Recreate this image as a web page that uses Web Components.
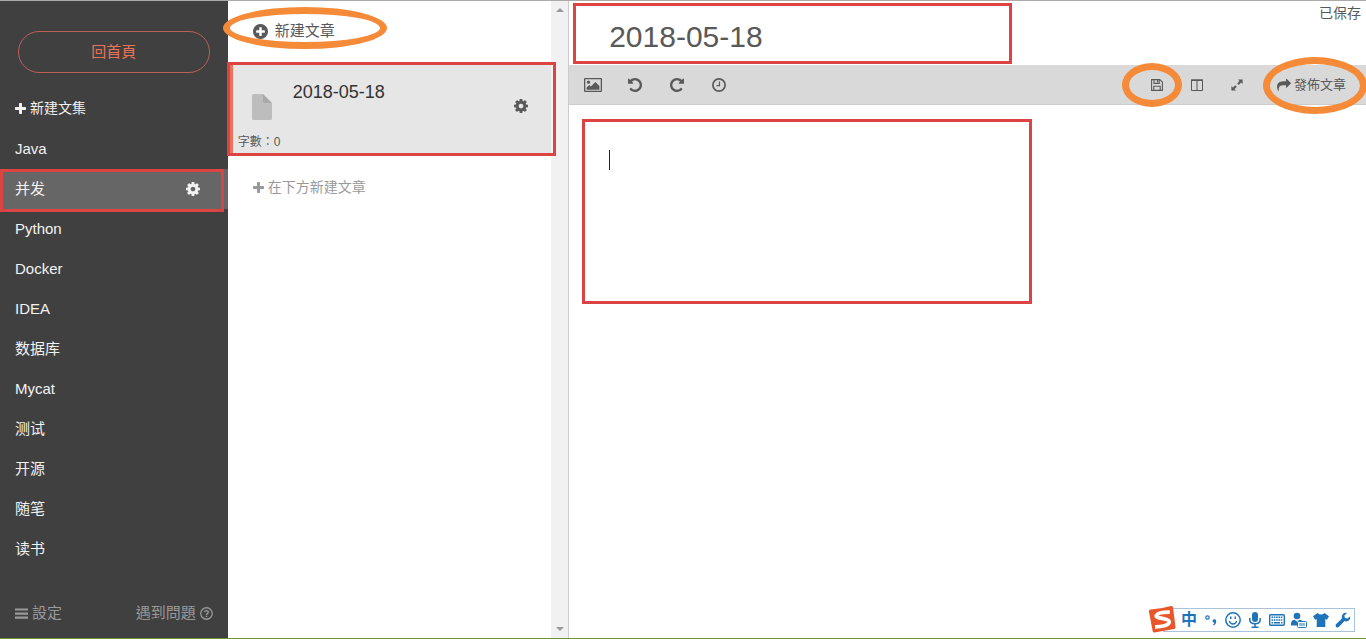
<!DOCTYPE html>
<html lang="zh-Hant">
<head>
<meta charset="utf-8">
<meta name="viewport" content="width=device-width, initial-scale=1">
<title>2018-05-18</title>
<style>
html, body { margin: 0; height: 100%; }
body {
  font-family: "Liberation Sans", "Noto Sans CJK TC", sans-serif;
  font-size: 14px; color: #595959; background: #fff; overflow: hidden;
}
</style>
</head>
<body>
<writer-app></writer-app>

<script>
const COG = '<path fill-rule="evenodd" d="M1152 896q0-106-75-181t-181-75-181 75-75 181 75 181 181 75 181-75 75-181zm512-109v222q0 12-8 23t-20 13l-185 28q-19 54-39 91 35 50 107 138 10 12 10 25t-9 23q-27 37-99 108t-94 71q-12 0-26-9l-138-108q-44 23-91 38-16 136-29 186-7 28-36 28h-222q-14 0-24.5-8.5t-11.5-21.5l-28-184q-49-16-90-37l-141 107q-10 9-25 9-14 0-25-11-126-114-165-168-7-10-7-23 0-12 8-23 15-21 51-66.5t54-70.5q-27-50-41-99l-183-27q-13-2-21-12.5t-8-23.5v-222q0-12 8-23t19-13l186-28q14-46 39-92-40-57-107-138-10-12-10-24 0-10 9-23 26-36 98.5-107.5t94.5-71.5q13 0 26 10l138 107q44-23 91-38 16-136 29-186 7-28 36-28h222q14 0 24.5 8.5t11.5 21.5l28 184q49 16 90 37l142-107q9-9 24-9 13 0 25 10 129 119 165 170 7 8 7 22 0 12-8 23-15 21-51 66.5t-54 70.5q26 50 41 98l183 28q13 2 21 12.5t8 23.5z"/>';
const UNDO = '<path d="M1664 896q0 156-61 298t-164 245-245 164-298 61q-172 0-327-72.5t-264-204.5q-7-10-6.5-22.5t8.5-20.5l137-138q10-9 25-9 16 2 23 12 73 95 179 147t225 52q104 0 198.5-40.5t163.5-109.5 109.5-163.5 40.5-198.5-40.5-198.5-109.5-163.5-163.5-109.5-198.5-40.5q-98 0-188 35.5t-160 101.5l137 138q31 30 14 69-17 40-59 40h-448q-26 0-45-19t-19-45v-448q0-42 40-59 39-17 69 14l130 129q107-101 244.5-156.5t284.5-55.5q156 0 298 61t245 164 164 245 61 298z"/>';

// name: [viewBox, markup]
const ICONS = {
  plus: ['192 128 1408 1408', '<path d="M1600 736v192q0 40-28 68t-68 28h-416v416q0 40-28 68t-68 28h-192q-40 0-68-28t-28-68v-416h-416q-40 0-68-28t-28-68v-192q0-40 28-68t68-28h416v-416q0-40 28-68t68-28h192q40 0 68 28t28 68v416h416q40 0 68 28t28 68z"/>'],
  plusCircle: ['128 128 1536 1536', '<path d="M1344 960v-128q0-26-19-45t-45-19h-256v-256q0-26-19-45t-45-19h-128q-26 0-45 19t-19 45v256h-256q-26 0-45 19t-19 45v128q0 26 19 45t45 19h256v256q0 26 19 45t45 19h128q26 0 45-19t19-45v-256h256q26 0 45-19t19-45zm320-64q0 209-103 385.5t-279.5 279.5-385.5 103-385.5-103-279.5-279.5-103-385.5 103-385.5 279.5-279.5 385.5-103 385.5 103 279.5 279.5 103 385.5z"/>'],
  cog: ['128 128 1536 1536', COG],
  undo: ['128 128 1536 1536', UNDO],
  redo: ['128 128 1536 1536', '<g transform="translate(1792 0) scale(-1 1)">' + UNDO + '</g>'],
  share: ['0 64 1792 1600', '<path d="M1792 640q0 26-19 45l-512 512q-19 19-45 19t-45-19-19-45v-256h-224q-98 0-175.5 6t-154 21.5-133 42.5-105.5 69.5-80 101-48.5 138.5-17.5 181q0 55 5 123 0 6 2.5 23.5t2.5 26.5q0 15-8.5 25t-23.5 10q-16 0-28-17-7-9-13-22t-13.5-30-10.5-24q-127-285-127-451 0-199 53-333 162-403 875-403h224v-256q0-26 19-45t45-19 45 19l512 512q19 19 19 45z"/>'],
  bars: ['0 0 14 14', '<path d="M0 1.5h14v2.4H0zM0 5.9h14v2.4H0zM0 10.3h14v2.4H0z"/>'],
  help: ['0 0 14 14', '<circle cx="7" cy="7" r="6.2" fill="none" stroke="currentColor" stroke-width="1.4"/><path d="M4.9 5.6Q5.1 3.9 7 3.9q2 0 2 1.6 0 1-1.1 1.6-.9.5-.9 1.4" fill="none" stroke="currentColor" stroke-width="1.5"/><rect x="6.2" y="9.3" width="1.6" height="1.5"/>'],
  image: ['0 0 18 14', '<path fill-rule="evenodd" d="M1 0h16q1 0 1 1v12q0 1-1 1H1q-1 0-1-1V1q0-1 1-1zM1.3 1.2v11.6h15.4V1.2z"/><circle cx="4.5" cy="4.2" r="1.6"/><path d="M2.6 11.8V9.6l2.7-2.5 1.6 1.5 4.5-4.6 4 4v3.8z"/>'],
  clock: ['0 0 14 14', '<circle cx="7" cy="7" r="6.1" fill="none" stroke="currentColor" stroke-width="1.7"/><path d="M7.5 3.6v4H4.6" fill="none" stroke="currentColor" stroke-width="1.2"/>'],
  save: ['0 0 12 12', '<path d="M.6.6h8.2l2.6 2.6v8.2H.6zM3 .8v3.6h5.2V.8M2.8 11.2V7.2h6.4v4M6.5 1v2.2" fill="none" stroke="currentColor" stroke-width="1.1"/>'],
  columns: ['0 0 12 12', '<path d="M.5 1h11v10.5H.5zM6 1v10.5" fill="none" stroke="currentColor"/><path d="M0 .5h12V2H0z"/>'],
  expand: ['0 0 12 12', '<path d="M7 0.5h4.6v4.6L10 3.6 7.7 5.9 6.2 4.4 8.5 2.1zM.4 6.9v4.6H5L3.5 10l2.3-2.3-1.5-1.5L2 8.5z"/>'],
  doc: ['0 0 20 26', '<path d="M1.5 0H11v7.5q0 1.5 1.5 1.5H20v15.5q0 1.5-1.5 1.5h-17Q0 26 0 24.5v-23Q0 0 1.5 0z" fill="#bdbdbd"/><path d="M11 0l9 9h-7.500q-1.500 0-1.500-1.500z" fill="#a9a9a9"/>'],
  logo: ['0 0 28 28', '<path d="M2.500 4.500Q13 4 23 1q1.500-.3 2 1.200L27.500 22q.2 1.500-1.200 2Q16 25.500 6.500 27.500q-1.400.3-1.800-1.200L.9 6.400Q.8 4.700 2.500 4.500z" fill="#e9562b"/><path d="M21.800 7.200Q9.500 7 8.300 10.600c-1 3.300 13 2.300 12.900 6.400-.1 3.500-8 4.900-14.200 4.800" fill="none" stroke="#fff" stroke-width="3.800"/>'],
  punct: ['0 0 14 14', '<circle cx="3.500" cy="4.500" r="1.700" fill="none" stroke="currentColor" stroke-width="1.200"/><path d="M8.500 8q0-1.800 1.800-1.800 2 0 2 2.300 0 2.700-2.800 4l-.5-.7q1.400-.9 1.400-2Q8.500 9.800 8.500 8z"/>'],
  smile: ['0 0 16 16', '<circle cx="8" cy="8" r="7.200" fill="none" stroke="currentColor" stroke-width="1.500"/><path d="M5 4.500h1.500V7H5zM9.500 4.500H11V7H9.500z"/><path d="M4.300 9q1 3 3.700 3t3.700-3" fill="none" stroke="currentColor" stroke-width="1.300"/>'],
  mic: ['0 0 14 16', '<rect x="4" y="0" width="6" height="10" rx="3"/><path d="M1.800 6v1.500q0 4.300 5.200 4.300t5.200-4.300V6M7 12v3.200M3.500 15.200h7" fill="none" stroke="currentColor" stroke-width="1.500"/>'],
  keyboard: ['0 0 16 12', '<rect x=".7" y=".7" width="14.600" height="10.600" rx="1" fill="none" stroke="currentColor" stroke-width="1.400"/><path d="M2.500 3.300h11M2.500 5.900h11" fill="none" stroke="currentColor" stroke-width="1.500" stroke-dasharray="1.600 .7"/><path d="M2.500 8.700h1.600M5 8.700h6M12 8.700h1.500" stroke="currentColor" stroke-width="1.500"/>'],
  person: ['0 0 16 16', '<circle cx="6" cy="4" r="3.300"/><path d="M0 13.500V11q.5-3 3.500-3.300L6 9.500l2.500-1.800q2.200.3 3 1.300H6v4.500z"/><rect x="6.500" y="9.500" width="9" height="6" rx="1" fill="#fff" stroke="currentColor"/><path d="M9 11v3M13 11v3M11 11v3" stroke="currentColor"/>'],
  shirt: ['0 0 16 14', '<path d="M4.500 0Q8 3 11.500 0L16 3.200 13.900 6.800 12.300 6v8H3.700V6l-1.600.8L0 3.200z"/>'],
  wrench: ['0 0 16 16', '<path d="M15.200 4.200Q15.600 7 13.700 8.500q-2 1.400-4.200.6L3.800 15q-1.300 1-2.700-.1-1.100-1.400-.1-2.700L6.900 6.500Q6.200 4.200 7.700 2.300 9.300.5 12 .9L9.400 3.500l.5 2.600 2.600.5z"/>'],
  up: ['0 0 8 4', '<path d="M4 0l4 4H0z"/>'],
  down: ['0 0 8 4', '<path d="M0 0h8L4 4z"/>']
};

function define(name, html) {
  const template = document.createElement('template');
  template.innerHTML = html;
  customElements.define(name, class extends HTMLElement {
    constructor() {
      super();
      this.attachShadow({ mode: 'open' }).append(template.content.cloneNode(true));
    }
  });
}

class UiIcon extends HTMLElement {
  connectedCallback() {
    if (this.shadowRoot) return;
    const [box, body] = ICONS[this.getAttribute('name')];
    this.attachShadow({ mode: 'open' }).innerHTML =
      `<style>:host{display:block;flex:none;width:14px;height:14px}svg{display:block;width:100%;height:100%;fill:currentColor}</style>
       <svg viewBox="${box}" aria-hidden="true">${body}</svg>`;
  }
}
customElements.define('ui-icon', UiIcon);

// Outline that highlights a part of the screen: a red box or an orange oval.
define('mark-outline', `
<style>
:host { display: block; position: absolute; box-sizing: border-box; z-index: 5; pointer-events: none; border: 3px solid #dc4343; }
:host([oval]) { border: 7px solid #f58a38; border-radius: 50%; }
</style>`);

define('notebook-item', `
<style>
:host { display: block; position: relative; }
.row { display: flex; align-items: center; height: 40px; padding: 0 28px 0 15px; }
a { flex: 1; color: inherit; text-decoration: none; font-size: 15px; line-height: 40px; }
button { display: none; padding: 0; border: 0; background: none; color: inherit; }
:host([active]) .row { background: #666; }
:host([active]) button { display: block; }
mark-outline { display: none; inset: 0 4px -3px 0; }
:host([active]) mark-outline { display: block; }
</style>
<div class="row"><a href="#"><slot></slot></a>
<button aria-label="設定"><ui-icon name="cog"></ui-icon></button></div>
<mark-outline></mark-outline>`);

define('side-bar', `
<style>
:host { display: flex; flex-direction: column; background: #404040; color: #f2f2f2; font-size: 15px; }
a { color: inherit; text-decoration: none; }
.home { margin: 30px 18px 0; height: 40px; line-height: 40px; border: 1px solid #b9605a; border-radius: 21px; text-align: center; color: #ec7259; }
.new { display: flex; align-items: center; gap: 4px; margin: 25px 15px 11px; padding: 0; border: 0; background: none; color: inherit; font: inherit; font-size: 14px; line-height: 20px; }
.new ui-icon { width: 11px; height: 11px; }
nav { flex: 1; font-family: "Liberation Sans", "Noto Sans CJK SC", sans-serif; }
footer { display: flex; justify-content: space-between; padding: 0 15px 15px; color: #999; line-height: 20px; }
footer a { display: flex; align-items: center; gap: 4px; }
footer ui-icon { width: 13px; height: 13px; }
</style>
<a class="home" href="#">回首頁</a>
<button class="new"><ui-icon name="plus"></ui-icon>新建文集</button>
<nav>
<notebook-item>Java</notebook-item>
<notebook-item active>并发</notebook-item>
<notebook-item>Python</notebook-item>
<notebook-item>Docker</notebook-item>
<notebook-item>IDEA</notebook-item>
<notebook-item>数据库</notebook-item>
<notebook-item>Mycat</notebook-item>
<notebook-item>测试</notebook-item>
<notebook-item>开源</notebook-item>
<notebook-item>随笔</notebook-item>
<notebook-item>读书</notebook-item>
</nav>
<footer><a href="#"><ui-icon name="bars"></ui-icon>設定</a><a href="#">遇到問題<ui-icon name="help"></ui-icon></a></footer>`);

define('article-card', `
<style>
:host { display: block; position: relative; }
article { display: flex; flex-direction: column; justify-content: space-between; box-sizing: border-box; height: 90px; padding: 18px 23px 4px 5px; border-left: 5px solid #ec7259; background: #e6e6e6; }
.main { display: flex; align-items: flex-start; padding-left: 14px; }
.doc { width: 20px; height: 26px; margin: 12px 21px 0 0; }
h2 { flex: 1; margin: 0; font-size: 18px; font-weight: 400; line-height: 20px; color: #333; }
button { margin: 17px 0 0; padding: 0; border: 0; background: none; color: inherit; }
.words { font-size: 12px; line-height: 16px; }
mark-outline { inset: -2px -5px -2px -1px; }
</style>
<article>
<div class="main"><ui-icon class="doc" name="doc"></ui-icon><h2><slot></slot></h2>
<button aria-label="文章設定"><ui-icon name="cog"></ui-icon></button></div>
<div class="words"><slot name="words"></slot></div>
</article>
<mark-outline></mark-outline>`);

define('article-list', `
<style>
:host { display: flex; border-right: 1px solid #ccc; box-sizing: border-box; }
.list { flex: 1; }
header { position: relative; height: 63px; padding: 0 0 0 25px; box-sizing: border-box; }
button { display: flex; align-items: center; padding: 0; border: 0; background: none; color: inherit; font: inherit; line-height: 20px; }
.new { gap: 7px; height: 60px; font-size: 15px; }
.new ui-icon { width: 15px; height: 15px; }
.below { gap: 4px; margin: 23px 25px 0; font-size: 14px; color: #999; }
.below ui-icon { width: 11px; height: 11px; }
header mark-outline { left: -5px; top: 6px; width: 164px; height: 42px; }
.track { display: flex; flex-direction: column; justify-content: space-between; align-items: center; width: 17px; padding: 7px 0; box-sizing: border-box; background: #f1f1f1; color: #999; }
.track ui-icon { width: 8px; height: 4px; }
</style>
<div class="list">
<header><button class="new"><ui-icon name="plusCircle"></ui-icon>新建文章</button><mark-outline oval></mark-outline></header>
<article-card>2018-05-18<span slot="words">字數：0</span></article-card>
<button class="below"><ui-icon name="plus"></ui-icon>在下方新建文章</button>
</div>
<div class="track" aria-hidden="true"><ui-icon name="up"></ui-icon><ui-icon name="down"></ui-icon></div>`);

define('editor-toolbar', `
<style>
:host { display: flex; align-items: center; height: 39px; padding: 0 20px 0 3px; background: #d9d9d9; border-bottom: 1px solid #ccc; }
button { position: relative; display: flex; align-items: center; justify-content: center; width: 42px; height: 38px; padding: 0; border: 0; background: none; color: inherit; font: inherit; }
.space { flex: 1; }
.wide { width: 18px; }
.small { width: 40px; }
.small ui-icon { width: 12px; height: 12px; }
.publish { width: auto; gap: 3px; margin-left: 20px; font-size: 13px; line-height: 20px; }
.save mark-outline { left: -15px; top: -3px; width: 60px; height: 44px; }
.publish mark-outline { left: -14px; top: -9px; width: 104px; height: 57px; }
</style>
<button aria-label="圖片"><ui-icon class="wide" name="image"></ui-icon></button>
<button aria-label="復原"><ui-icon name="undo"></ui-icon></button>
<button aria-label="重做"><ui-icon name="redo"></ui-icon></button>
<button aria-label="歷史"><ui-icon name="clock"></ui-icon></button>
<span class="space"></span>
<button class="small save" aria-label="保存"><ui-icon name="save"></ui-icon><mark-outline oval></mark-outline></button>
<button class="small" aria-label="預覽"><ui-icon name="columns"></ui-icon></button>
<button class="small" aria-label="全螢幕"><ui-icon name="expand"></ui-icon></button>
<button class="publish"><ui-icon name="share"></ui-icon>發佈文章<mark-outline oval></mark-outline></button>`);

define('article-editor', `
<style>
:host { display: flex; flex-direction: column; min-width: 0; }
header { position: relative; display: flex; align-items: flex-start; height: 64px; }
input { flex: 1; min-width: 0; height: 64px; box-sizing: border-box; padding: 8px 0 0 40px; border: 0; outline: 0; background: none; color: #595959; font: 30px "Liberation Sans", sans-serif; }
output { padding: 2px 5px 0; line-height: 20px; }
header mark-outline { left: 4px; top: 2px; width: 439px; height: 61px; }
.body { position: relative; flex: 1; display: flex; }
textarea { flex: 1; box-sizing: border-box; padding: 40px; border: 0; outline: 0; resize: none; background: none; color: #333; font: 18px/30px "Liberation Sans", "Noto Sans CJK TC", sans-serif; }
.caret { position: absolute; left: 40px; top: 45px; width: 1px; height: 20px; background: #222; }
.body mark-outline { left: 13px; top: 14px; width: 450px; height: 185px; }
</style>
<header><input type="text" value="2018-05-18" aria-label="標題"><output>已保存</output><mark-outline></mark-outline></header>
<editor-toolbar></editor-toolbar>
<div class="body"><textarea aria-label="內容"></textarea><span class="caret"></span><mark-outline></mark-outline></div>`);

define('ime-bar', `
<style>
:host { position: fixed; right: 11px; bottom: 7px; display: flex; align-items: center; gap: 6px; height: 22px; padding: 0 3px 0 17px; border: 1px solid #a9c3dc; background: #fff; color: #1f73b8; }
.logo { position: absolute; left: -16px; top: -4px; width: 28px; height: 28px; }
b { width: 16px; font-size: 16px; line-height: 20px; }
ui-icon { width: 16px; height: 16px; }
.slim { height: 14px; }
</style>
<ui-icon class="logo" name="logo"></ui-icon>
<b>中</b>
<ui-icon class="slim" name="punct"></ui-icon>
<ui-icon name="smile"></ui-icon>
<ui-icon name="mic"></ui-icon>
<ui-icon name="keyboard"></ui-icon>
<ui-icon name="person"></ui-icon>
<ui-icon class="slim" name="shirt"></ui-icon>
<ui-icon name="wrench"></ui-icon>`);

define('writer-app', `
<style>
:host { display: grid; grid-template-columns: 4fr 6fr 14fr; box-sizing: border-box; height: 100vh; border-top: 1px solid #aaa; border-bottom: 1px solid #6b9440; }
side-bar, article-list, article-editor { min-width: 0; }
</style>
<side-bar></side-bar>
<article-list></article-list>
<article-editor></article-editor>
<ime-bar></ime-bar>`);
</script>
</body>
</html>
